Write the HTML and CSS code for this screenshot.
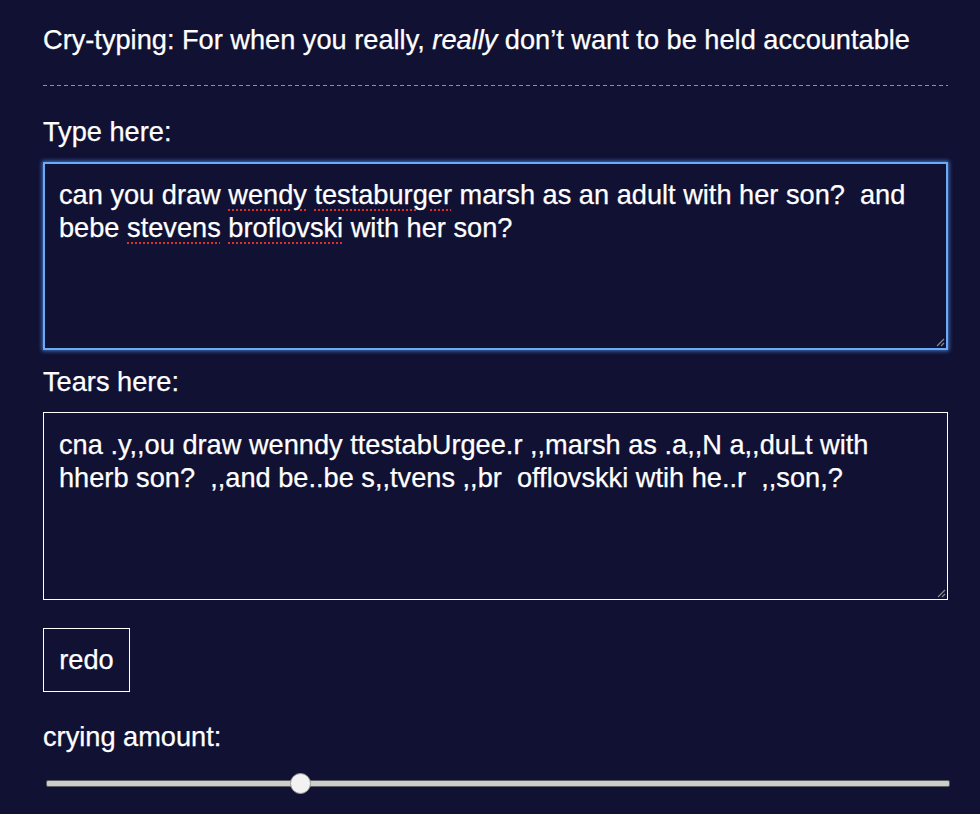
FILE: index.html
```html
<!DOCTYPE html>
<html>
<head>
<meta charset="utf-8">
<link rel="stylesheet" href="styles.css">
</head>
<body>
<main class="page">
  <h1 class="title">Cry-typing: For when you really, <em>really</em> don’t want to be held accountable</h1>
  <hr class="rule">
  <label class="label">Type here:</label>
  <div class="field focused">can you draw <span class="sp">wendy</span> <span class="sp">testaburger</span> marsh as an adult with her son?&nbsp; and bebe <span class="sp">stevens</span> <span class="sp">broflovski</span> with her son?<svg class="grip" width="10" height="10" viewBox="0 0 10 10"><path d="M9 2 L2 9 M9 6 L6 9" stroke="#8a8a8a" stroke-width="1.2"/></svg></div>
  <label class="label second">Tears here:</label>
  <div class="field">cna .y,,ou draw wenndy ttestabUrgee.r ,,marsh as .a,,N a,,duLt with hherb son?&nbsp; ,,and be..be s,,tvens ,,br&nbsp; offlovskki wtih he..r&nbsp; ,,son,?<svg class="grip" width="10" height="10" viewBox="0 0 10 10"><path d="M9 2 L2 9 M9 6 L6 9" stroke="#8a8a8a" stroke-width="1.2"/></svg></div>
  <button class="redo">redo</button>
  <label class="label amount">crying amount:</label>
  <div class="slider">
    <div class="track"></div>
    <div class="thumb" style="left: 27.1%"></div>
  </div>
</main>
</body>
</html>
```
FILE: styles.css
```css
html, body {
  margin: 0;
  padding: 0;
  background: #111133;
  color: #ffffff;
  font-family: "Liberation Sans", Arial, sans-serif;
}
.page {
  width: 905px;
  margin-left: 43px;
  padding-top: 24px;
  -webkit-text-stroke: 0.25px #ffffff;
}
.title {
  font-size: 27.2px;
  font-weight: normal;
  margin: 0;
  line-height: 32px;
  white-space: nowrap;
}
.title em { font-style: italic; }
.rule {
  border: 0;
  height: 1px;
  margin: 29px 0 0 0;
  background: repeating-linear-gradient(to right, #8686ec 0 4px, transparent 4px 7px);
}
.label {
  display: block;
  font-size: 27.2px;
  line-height: 32px;
  margin-top: 30px;
}
.label.second { margin-top: 16px; }
.label.amount { margin-top: 29px; }
.field {
  position: relative;
  box-sizing: border-box;
  height: 188px;
  margin-top: 14px;
  border: 1px solid #ffffff;
  padding: 15px 15px;
  font-size: 27.2px;
  line-height: 33px;
}
.field.focused {
  border: 2px solid #6aaaf6;
  padding: 14px 14px;
  box-shadow: 0 0 4px 1px rgba(80, 150, 240, 0.75);
}
.sp {
  text-decoration: underline dotted #e0302a;
  text-decoration-thickness: 2px;
  text-underline-offset: 5px;
}
.grip {
  position: absolute;
  right: 1px;
  bottom: 1px;
}
.redo {
  display: block;
  margin-top: 28px;
  width: 87px;
  height: 64px;
  background: transparent;
  border: 1px solid #ffffff;
  color: #ffffff;
  font-family: "Liberation Sans", Arial, sans-serif;
  font-size: 27.2px;
  padding: 0;
  -webkit-text-stroke: 0.25px #ffffff;
}
.slider {
  position: relative;
  margin-top: 18px;
  margin-left: 3px;
  width: 904px;
  height: 24px;
}
.track {
  position: absolute;
  left: 0;
  right: 0;
  top: 9px;
  height: 7px;
  box-sizing: border-box;
  background: #cdcdcd;
  border: 1px solid #5e5e5e;
  border-radius: 2px;
}
.thumb {
  position: absolute;
  top: 2px;
  width: 21px;
  height: 21px;
  margin-left: -1px;
  box-sizing: border-box;
  border-radius: 50%;
  background: #f2f2f2;
  border: 1px solid #9a9a9a;
}
```
